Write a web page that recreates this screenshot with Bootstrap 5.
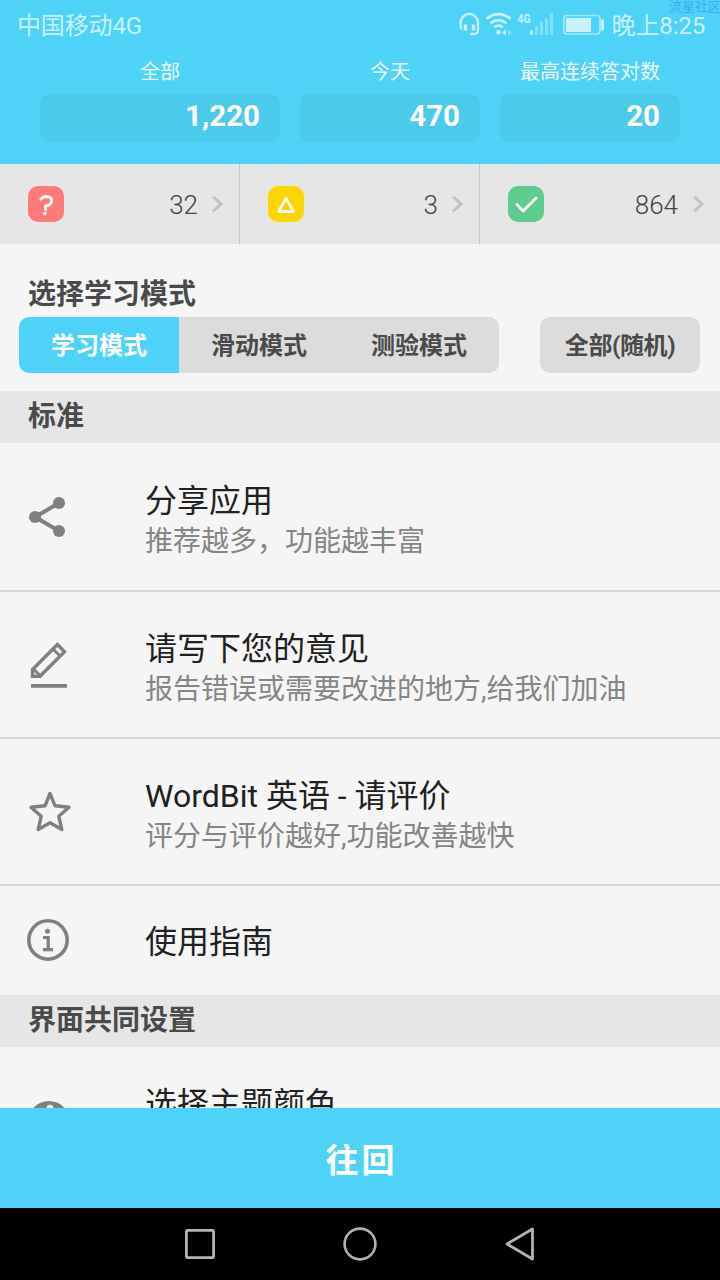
<!DOCTYPE html>
<html lang="zh-CN">
<head>
<meta charset="utf-8">
<meta name="viewport" content="width=device-width, initial-scale=1">
<title>WordBit 英语</title>
<link href="https://cdn.jsdelivr.net/npm/bootstrap@5.3.0/dist/css/bootstrap.min.css" rel="stylesheet">
<style>
  :root { --sky: #4ed2f8; --panel: #f5f5f5; --band: #e6e6e6; --ink: #4a4a4a; }
  body { font-family: Roboto, "Noto Sans CJK SC", sans-serif; background: var(--panel); height: 1280px; overflow: hidden; line-height: 1; }
  svg { display: block; flex: none; }
  .screen { width: 720px; height: 1280px; }
  .sky { background: var(--sky); }
  .status-bar { height: 50px; padding: 0 15px 0 17px; font-size: 24px; color: rgba(255,255,255,.7); }
  .status-bar span { letter-spacing: -.15px; padding-top: 1px; }
  .watermark { top: 0; right: -1px; font-size: 13px; line-height: 13px; color: #3fa9f5; white-space: nowrap; }
  .stats { height: 114px; padding: 12px 40px 0; gap: 20px; color: #fff; }
  .stat-label { font-size: 20px; line-height: 20px; margin-bottom: 12px; color: rgba(255,255,255,.93); }
  .stat-value { height: 48px; border-radius: 10px; background: #4bcaeb; font-size: 29.500px; line-height: 44px; padding-right: 20px; }
  .w-total { width: 240px; } .w-part { width: 180px; }
  .counts { height: 80px; background: var(--band); }
  .count-cell { width: 240px; padding: 0 15px 0 28px; border-right: 1px solid #c8c8c8; }
  .count-cell:last-child { border: 0; }
  .count-num { font-size: 26px; font-weight: 300; color: #444; padding-top: 2px; margin-right: 14px; }
  .count-cell:last-child .count-num { margin-right: 15px; }
  .mode-area { height: 147px; padding: 36px 20px 0 19px; color: var(--ink); }
  .section-title { font-size: 28px; line-height: 30px; font-weight: 700; color: var(--ink); }
  .mode-area .section-title { margin: 0 0 7px 9px; }
  .mode-btn { width: 160px; height: 56px; border: 0; border-radius: 10px; background: #dcdcdc; color: var(--ink); font-size: 24px; font-weight: 700; padding: 3px 0 0; line-height: 53px; white-space: nowrap; }
  .mode-btn:hover, .mode-btn:active { background: #dcdcdc; color: var(--ink); }
  .mode-btn.on { background: var(--sky); color: #fff; }
  .mode-btn.order { letter-spacing: -.4px; }
  .modes { gap: 41px; }
  .modes .btn-group > .btn.mode-btn.mode-btn { margin-left: 0 !important; flex: none; }
  .band { height: 52px; background: var(--band); padding: 11px 28px 0; }
  .option { height: 147px; padding: 0 0 0 25px; background: var(--panel); border: 0; border-radius: 0 !important; color: #212121; }
  .list-group .option.option.option { border-bottom: 2px solid #d5d5d5; }
  .option.first { height: 149px; }
  .option.single { height: 109px; }
  .list-group .option.single.single.single { border-bottom: 0; }
  .option-text { margin-left: 72px; padding-top: 7px; }
  .single .option-text { padding-top: 3px; }
  .option-name { font-size: 32px; line-height: 38px; }
  .option-sub { font-size: 28px; line-height: 34px; margin-top: 5px; color: #858585; }
  .peek { height: 61px; padding-top: 38px; align-items: flex-start !important; }
  .peek .option-text { padding-top: 0; }
  .back-btn { height: 100px; font-size: 33px; font-weight: 700; letter-spacing: 3px; color: #fff; line-height: 98px; padding: 4px 0 0 3px; }
  .nav-keys { height: 72px; background: #000; gap: 124px; }
</style>
</head>
<body>
<div class="screen d-flex flex-column position-relative overflow-hidden">
  <header class="sky">
    <div class="status-bar d-flex align-items-center justify-content-between">
      <span>中国移动4G</span>
      <div class="d-flex align-items-center">
        <svg width="154" height="50" viewBox="458 0 154 50" fill="none" stroke="#c9f0fc">
          <path d="M461.500 29.500Q460.500 28 460.500 23A8.700 9 0 0 1 478 23V30Q478 34 473.500 34H470.500" stroke-width="2.300"/>
          <path d="M465.500 24.500V30.500M473.500 24.500V30.500" stroke-width="3.400"/>
          <path d="M486.500 18.700Q498.500 9.500 510.500 18.700M490.500 23.300Q498.500 17 506.500 23.300M494.200 27.200Q498.500 24 502.800 27.200" stroke-width="2.500"/>
          <circle cx="498.500" cy="32.200" r="2.300" fill="#c9f0fc" stroke="none"/>
          <path d="M502 32.500L506 29.500V35.500Z" fill="#c9f0fc" stroke="none"/><path d="M512 32.500L508 29.500V35.500Z" fill="#84dff9" stroke="none"/>
          <text x="517.500" y="23" font-size="13.500" font-weight="700" textLength="13" lengthAdjust="spacingAndGlyphs" fill="#c9f0fc" stroke="none">4G</text>
          <path d="M531.500 30.500V34.800" stroke-width="3"/>
          <path d="M536.500 26V35M541.500 22V35M546.500 18V35M551.500 13V35" stroke="#84dff9" stroke-width="3"/>
          <rect x="564" y="15.500" width="36" height="18.500" rx="3" stroke="#a5e8fb" stroke-width="1.700"/>
          <rect x="566" y="18" width="25" height="14" fill="#c9f0fc" stroke="none"/>
          <path d="M602.500 19.500V30.500" stroke-width="2.800"/>
        </svg>
        <span>晚上8:25</span>
      </div>
    </div>
    <div class="stats d-flex">
      <div class="w-total text-center"><div class="stat-label">全部</div><div class="stat-value fw-bold text-end">1,220</div></div>
      <div class="w-part text-center"><div class="stat-label">今天</div><div class="stat-value fw-bold text-end">470</div></div>
      <div class="w-part text-center"><div class="stat-label">最高连续答对数</div><div class="stat-value fw-bold text-end">20</div></div>
    </div>
  </header>
  <span class="watermark position-absolute">流星社区</span>

  <div class="counts d-flex">
    <div class="count-cell d-flex align-items-center">
      <svg width="36" height="36" viewBox="0 0 36 36"><rect width="36" height="36" rx="10" fill="#ff7b7b"/><path d="M13 13Q15 10.500 18.500 10.500Q24 10.800 23.600 15.300Q23.300 18.800 17.500 20V23.500" fill="none" stroke="#f8f8f8" stroke-width="3" stroke-linecap="round" stroke-linejoin="round"/><circle cx="16.800" cy="27.600" r="1.900" fill="#f8f8f8"/></svg>
      <span class="count-num ms-auto">32</span>
      <svg width="12" height="18" viewBox="0 0 12 18"><path d="M2 2.500L9 9L2 15.500" fill="none" stroke="#c2c2c2" stroke-width="3" stroke-linecap="round"/></svg>
    </div>
    <div class="count-cell d-flex align-items-center">
      <svg width="36" height="36" viewBox="0 0 36 36"><rect width="36" height="36" rx="10" fill="#ffd500"/><path d="M18 12.500L25.500 25.500H10.500Z" fill="none" stroke="#f8f8f8" stroke-width="2.800" stroke-linejoin="round"/></svg>
      <span class="count-num ms-auto">3</span>
      <svg width="12" height="18" viewBox="0 0 12 18"><path d="M2 2.500L9 9L2 15.500" fill="none" stroke="#c2c2c2" stroke-width="3" stroke-linecap="round"/></svg>
    </div>
    <div class="count-cell d-flex align-items-center">
      <svg width="36" height="36" viewBox="0 0 36 36"><rect width="36" height="36" rx="10" fill="#5fcc8f"/><path d="M9 18.500L15.200 25L28 12" fill="none" stroke="#fafafa" stroke-width="3" stroke-linecap="round" stroke-linejoin="round"/></svg>
      <span class="count-num ms-auto">864</span>
      <svg width="12" height="18" viewBox="0 0 12 18"><path d="M2 2.500L9 9L2 15.500" fill="none" stroke="#c2c2c2" stroke-width="3" stroke-linecap="round"/></svg>
    </div>
  </div>

  <section class="mode-area">
    <h2 class="section-title">选择学习模式</h2>
    <div class="modes d-flex">
      <div class="btn-group">
        <button class="btn mode-btn on">学习模式</button>
        <button class="btn mode-btn">滑动模式</button>
        <button class="btn mode-btn">测验模式</button>
      </div>
      <button class="btn mode-btn order">全部(随机)</button>
    </div>
  </section>

  <div class="band"><h2 class="section-title m-0">标准</h2></div>
  <div class="list-group list-group-flush">
    <div class="list-group-item option first d-flex align-items-center">
      <svg width="48" height="48" viewBox="25 493 48 48" fill="#808080"><path d="M59 503L35 517L59 531" fill="none" stroke="#808080" stroke-width="4"/><circle cx="59" cy="503" r="6"/><circle cx="35" cy="517" r="6"/><circle cx="59" cy="531" r="6"/></svg>
      <div class="option-text"><div class="option-name">分享应用</div><div class="option-sub">推荐越多，功能越丰富</div></div>
    </div>
    <div class="list-group-item option d-flex align-items-center">
      <svg width="48" height="48" viewBox="25 641 48 48" fill="none" stroke="#808080"><path d="M32.500 669.500L57.500 644.500L64.500 651.700L40 676.300H32.500Z" stroke-width="3.400"/><path d="M53 649L60.500 656.500M33 668.500L40.500 676" stroke-width="3"/><path d="M31 685.800H67" stroke-width="3.700"/></svg>
      <div class="option-text"><div class="option-name">请写下您的意见</div><div class="option-sub">报告错误或需要改进的地方,给我们加油</div></div>
    </div>
    <div class="list-group-item option d-flex align-items-center">
      <svg width="48" height="48" viewBox="25 788 48 48"><path d="M50 793.500L55 805.800L69 807.300L58.800 816.300L61.800 829.500L50 822.800L38.200 829.500L41.200 816.300L31 807.300L45 805.800Z" fill="none" stroke="#808080" stroke-width="3.400" stroke-linejoin="round"/></svg>
      <div class="option-text"><div class="option-name">WordBit 英语 - 请评价</div><div class="option-sub">评分与评价越好,功能改善越快</div></div>
    </div>
    <div class="list-group-item option single d-flex align-items-center">
      <svg width="48" height="48" viewBox="25 917 48 48" fill="none" stroke="#808080"><circle cx="48" cy="940" r="19.200" stroke-width="3.600"/><circle cx="47.500" cy="931.300" r="2.500" fill="#808080" stroke="none"/><path d="M43 937.500H48.200V949.500M43 949.700H53" stroke-width="3.200"/></svg>
      <div class="option-text"><div class="option-name">使用指南</div></div>
    </div>
  </div>

  <div class="band"><h2 class="section-title m-0">界面共同设置</h2></div>
  <div class="option peek d-flex border-0 overflow-hidden">
    <svg width="48" height="48" viewBox="25 1085 48 48"><circle cx="49" cy="1122" r="21" fill="#808080"/><circle cx="50" cy="1108" r="3.300" fill="#f5f5f5"/></svg>
    <div class="option-text"><div class="option-name text-nowrap">选择主题颜色</div></div>
  </div>

  <button class="btn back-btn sky rounded-0 border-0 w-100">往回</button>
  <nav class="nav-keys d-flex justify-content-center align-items-center" aria-label="系统导航">
    <svg width="36" height="36" viewBox="0 0 36 36" fill="none" stroke="#b3b3b3" stroke-width="2.800"><rect x="4.400" y="4.400" width="27.200" height="27.200" rx="1.500"/></svg>
    <svg width="36" height="36" viewBox="0 0 36 36" fill="none" stroke="#b3b3b3" stroke-width="2.600"><circle cx="18" cy="18" r="15.400"/></svg>
    <svg width="36" height="36" viewBox="0 0 36 36" fill="none" stroke="#b3b3b3" stroke-width="2.800" stroke-linejoin="round"><path d="M5 18L30.500 3V33Z"/></svg>
  </nav>
</div>
<script src="https://cdn.jsdelivr.net/npm/bootstrap@5.3.0/dist/js/bootstrap.bundle.min.js"></script>
</body>
</html>
